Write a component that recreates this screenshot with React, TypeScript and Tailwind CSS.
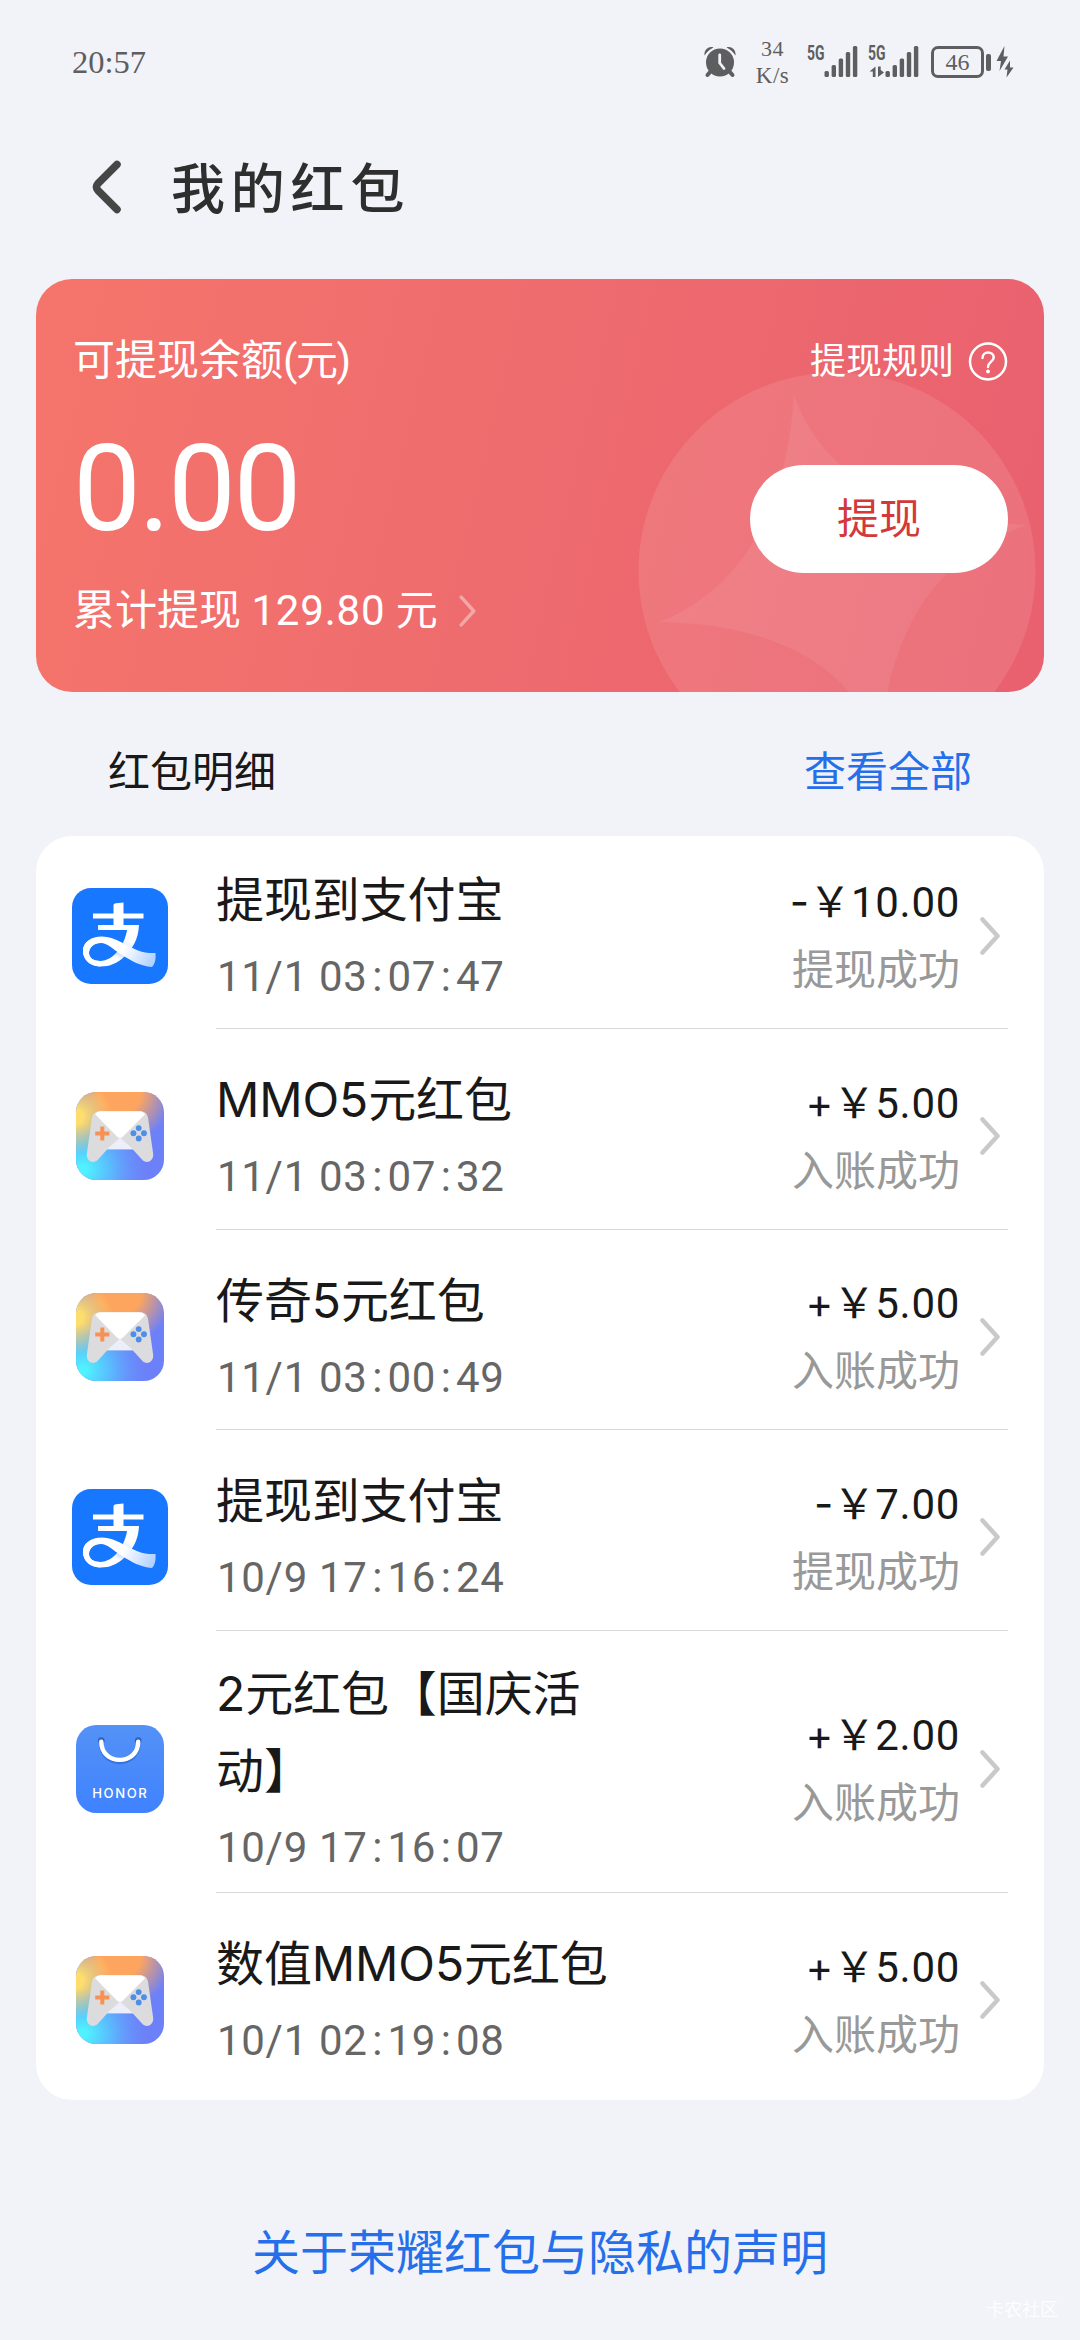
import React from 'react'

type IconKind = 'alipay' | 'game' | 'honor'

interface RecordItem {
  icon: IconKind
  title: string
  time: string
  sign: '+' | '-'
  amount: string
  status: string
}

const RECORDS: RecordItem[] = [
  { icon: 'alipay', title: '提现到支付宝', time: '11/1 03:07:47', sign: '-', amount: '10.00', status: '提现成功' },
  { icon: 'game', title: 'MMO5元红包', time: '11/1 03:07:32', sign: '+', amount: '5.00', status: '入账成功' },
  { icon: 'game', title: '传奇5元红包', time: '11/1 03:00:49', sign: '+', amount: '5.00', status: '入账成功' },
  { icon: 'alipay', title: '提现到支付宝', time: '10/9 17:16:24', sign: '-', amount: '7.00', status: '提现成功' },
  { icon: 'honor', title: '2元红包【国庆活动】', time: '10/9 17:16:07', sign: '+', amount: '2.00', status: '入账成功' },
  { icon: 'game', title: '数值MMO5元红包', time: '10/1 02:19:08', sign: '+', amount: '5.00', status: '入账成功' },
]

function AlipayIcon() {
  return (
    <svg width="96" height="96" viewBox="0 0 96 96">
      <defs>
        <linearGradient id="ali-tail" x1="30" y1="50" x2="84" y2="76" gradientUnits="userSpaceOnUse">
          <stop offset="0.4" stopColor="#fff" />
          <stop offset="1" stopColor="#a9ccff" />
        </linearGradient>
        <linearGradient id="ali-arm" x1="60" y1="40" x2="44" y2="70" gradientUnits="userSpaceOnUse">
          <stop offset="0.35" stopColor="#fff" />
          <stop offset="0.8" stopColor="#c4dcff" />
          <stop offset="1" stopColor="#fff" />
        </linearGradient>
      </defs>
      <rect width="96" height="96" rx="19" fill="#1777ff" />
      <path d="M41.500 17.500C41.500 16 42.500 15.400 44 15.200L51.500 14.600V25.500H71.500V30.500H51.500V37H67C66.500 51 60 62 52.500 68.500C45 75.500 37 78.700 28 78.500C17 78 11 71 11 63C11 54 19 49 30 49L30 54.800C21 54.800 17 60 17 65C17 70 22 73 28 73C42 73 53 56 55 42H26V37H41.500V30.500H21V25.500H41.500Z" fill="url(#ali-arm)" />
      <path d="M11 63C11 54 19 48.500 30 48.500C43 48.500 54 58 66 62.500C72 64.700 78 65.400 83.500 65C84 71 83 76 80 79C68 78 60 73 50 67C40 60.500 35 55 29 55C21 55 17 60 17 65C17 70 22 73 28 73L28 78.500C17 78 11 71 11 63Z" fill="url(#ali-tail)" />
    </svg>
  )
}

function GameIcon() {
  return (
    <svg width="88" height="88" viewBox="0 0 87 87">
      <defs>
        <radialGradient id="g-cyan" cx="0.08" cy="0.88" r="0.75">
          <stop offset="0.05" stopColor="#4ff3ff" />
          <stop offset="0.45" stopColor="#58c0ff" stopOpacity="0.85" />
          <stop offset="1" stopColor="#6b8dfb" stopOpacity="0" />
        </radialGradient>
        <radialGradient id="g-orange" cx="0.5" cy="0" r="0.6">
          <stop offset="0.4" stopColor="#fda55f" />
          <stop offset="1" stopColor="#fda55f" stopOpacity="0" />
        </radialGradient>
        <radialGradient id="g-yellow" cx="0" cy="0.28" r="0.42">
          <stop offset="0.2" stopColor="#fddd6c" />
          <stop offset="1" stopColor="#fddd6c" stopOpacity="0" />
        </radialGradient>
      </defs>
      <rect width="87" height="87" rx="20" fill="#6c80f9" />
      <rect width="87" height="87" rx="20" fill="url(#g-cyan)" />
      <rect width="87" height="87" rx="20" fill="url(#g-orange)" />
      <rect width="87" height="87" rx="20" fill="url(#g-yellow)" />
      <path d="M24 19H63C68 19 70.5 21.5 71.3 26L76.3 61C77 68.5 69.5 71.5 65.5 67L56 56.5H31L21.500 67C17.500 71.5 10 68.500 10.700 61L15.700 26C16.500 21.500 19 19 24 19Z" fill="#dcdcde" />
      <path d="M19 22C20.500 19.800 22 19 24.500 19H62.500C65 19 66.800 20 68.300 22L47 43.500C44.500 46 42.500 46 40 43.500Z" fill="#fff" />
      <path d="M43.500 45.300L56.500 56.500H30.500Z" fill="#eceefa" />
      <path d="M26 34V48M19 41H33" stroke="#f79256" strokeWidth="4" />
      <g fill="#4d8fe8">
        <circle cx="62" cy="35.700" r="2.900" />
        <circle cx="62" cy="46" r="2.900" />
        <circle cx="56.800" cy="40.800" r="2.900" />
        <circle cx="67.200" cy="40.800" r="2.900" />
      </g>
    </svg>
  )
}

function HonorIcon() {
  return (
    <svg width="88" height="88" viewBox="0 0 87 87">
      <defs>
        <linearGradient id="h-bg" x1="0" y1="0" x2="0" y2="1">
          <stop offset="0" stopColor="#5492f6" />
          <stop offset="1" stopColor="#3f82ff" />
        </linearGradient>
      </defs>
      <rect width="87" height="87" rx="20" fill="url(#h-bg)" />
      <circle cx="25" cy="15.500" r="3.300" fill="#2f62c8" />
      <circle cx="61.500" cy="15.500" r="3.300" fill="#2f62c8" />
      <path d="M25 18.500C25 42.500 61.500 42.500 61.500 18.500" fill="none" stroke="#3672e0" strokeWidth="4.400" />
      <path d="M25 16.500C25 40.500 61.500 40.500 61.500 16.500" fill="none" stroke="#fff" strokeWidth="4.400" strokeLinecap="round" />
      <text x="16" y="72" textLength="54" fill="#fff" className="font-[Inter,sans-serif] text-[13px] font-medium">
        HONOR
      </text>
    </svg>
  )
}

function Chevron({ className, width }: { className: string; width: number }) {
  return (
    <svg viewBox="0 0 20 38" className={className} fill="none" stroke="currentColor" strokeWidth={width} strokeLinecap="round" strokeLinejoin="round">
      <path d="M2.500 2.500L17.500 19L2.500 35.500" />
    </svg>
  )
}

function SignalBars() {
  return (
    <g>
      <rect x="0" y="25" width="4.400" height="6" rx="1.500" />
      <rect x="7.100" y="19" width="4.400" height="12" rx="1.500" />
      <rect x="14.200" y="12.500" width="4.400" height="18.500" rx="1.500" />
      <rect x="21.300" y="6" width="4.400" height="25" rx="1.500" />
      <rect x="28.400" y="0" width="4.400" height="31" rx="1.500" />
    </g>
  )
}

function Signal({ arrows }: { arrows?: boolean }) {
  return (
    <svg width="50" height="32" viewBox="0 0 50 32" fill="currentColor" className="overflow-visible">
      <text x="-1" y="14" textLength="17.500" lengthAdjust="spacingAndGlyphs" className="font-[Roboto,sans-serif] text-[20px] font-bold">
        5G
      </text>
      <g transform="translate(16.500 0)">
        <SignalBars />
      </g>
      {arrows && <path d="M6.500 20.500V31H3.800V25.500H0.500ZM9 20.500V31L15 26.500L11.700 24V20.500Z" />}
    </svg>
  )
}

function StatusBar() {
  return (
    <div className="flex h-[124px] items-center justify-between pr-[66px] pl-[72px] font-['Liberation_Serif',serif] text-[#5e5e61]">
      <span className="text-[32.5px]">20:57</span>
      <div className="flex items-center">
        <svg width="32" height="32" viewBox="0 0 32 32" fill="currentColor">
          <path d="M0.600 9.500C-0.500 4 5 -0.500 9.500 1.500C6 3 2.800 6 0.600 9.500ZM31.400 9.500C32.500 4 27 -0.500 22.500 1.500C26 3 29.200 6 31.400 9.500Z" />
          <circle cx="16" cy="16.500" r="14" />
          <path d="M6.500 25.500L3.500 29M25.500 25.500L28.500 29" stroke="currentColor" strokeWidth="4" strokeLinecap="round" />
          <path d="M15.700 9V17L20 22.500" fill="none" stroke="#f1f3f8" strokeWidth="2.800" strokeLinecap="round" strokeLinejoin="round" />
        </svg>
        <div className="mr-[18px] ml-[19px] w-[35px] text-center text-[22px] leading-[27px] tracking-[0.5px]">
          34
          <br />
          <span className="text-[23px]">K/s</span>
        </div>
        <Signal />
        <div className="w-[11px]" />
        <Signal arrows />
        <div className="ml-[12px] flex h-[32px] w-[53px] items-center justify-center rounded-[7px] border-[3px] border-current text-[24px] leading-none">
          46
        </div>
        <div className="ml-[2px] h-[17px] w-[5px] rounded-[2px] bg-current" />
        <svg width="18" height="32" viewBox="0 0 18 32" fill="currentColor" className="ml-[5px]">
          <path d="M8.500 0L0.500 15H5L3.500 25L12 10.500H7.500ZM14 14.500L8.500 23.500H11.500L10.500 31.500L17.500 21.500H14Z" />
        </svg>
      </div>
    </div>
  )
}

function BalanceCard() {
  return (
    <section className="relative mx-9 h-[413px] overflow-hidden rounded-[36px] bg-[linear-gradient(103deg,#f5756b_0%,#ee6b6e_50%,#e9606f_100%)] text-white">
      <svg className="absolute inset-0" width="1008" height="413" viewBox="36 279 1008 413">
        <circle cx="837" cy="571" r="198.500" fill="#fff" fillOpacity="0.1" />
        <path d="M794 395Q836 516 1027 525Q892 570 880 747Q838 626 660 622Q782 572 794 395Z" fill="#fff" fillOpacity="0.07" />
      </svg>
      <div className="relative flex h-full justify-between pr-9 pl-[37px]">
        <div className="flex flex-col">
          <div className="mt-[52px] text-[42px] leading-[60px]">
            可提现余额<span className="tracking-[-1.5px]">(</span>元<span className="-ml-[1.5px]">)</span>
          </div>
          <div className="mt-[28px] text-[121px] leading-[140px] tracking-[-2.5px]">0.00</div>
          <div className="mt-[22px] flex items-center text-[42px] leading-[60px]">
            <span className="whitespace-pre">累计提现 <span className="tracking-[0.8px]">129.80</span> 元</span>
            <Chevron className="ml-[21px] h-[32px] w-[17px] text-white/40" width={4} />
          </div>
        </div>
        <div className="flex flex-col items-end">
          <div className="mt-[53px] flex h-[60px] items-center text-[36px]">
            提现规则
            <svg width="40" height="40" viewBox="0 0 40 40" fill="none" stroke="currentColor" strokeWidth="2.500" className="ml-[14px]">
              <circle cx="20" cy="19.500" r="18" />
              <path d="M14.500 16C14.500 8.500 25.700 9 25.700 15.500C25.700 19.500 20 20 20 25" strokeLinecap="round" />
              <circle cx="20" cy="29.500" r="1.900" fill="currentColor" stroke="none" />
            </svg>
          </div>
          <button className="mt-[73px] h-[108px] w-[258px] rounded-full bg-white text-[42px] text-[#d3393b]">提现</button>
        </div>
      </div>
    </section>
  )
}

function RecordRow({ item }: { item: RecordItem }) {
  return (
    <div className="flex min-h-[186px] items-center pt-px pr-9">
      <div className="flex w-[168px] justify-center">
        {item.icon === 'alipay' && <AlipayIcon />}
        {item.icon === 'game' && <GameIcon />}
        {item.icon === 'honor' && <HonorIcon />}
      </div>
      <div className="ml-3 w-[400px] pt-[10px] pb-[5px]">
        <div className="font-[Inter,'Noto_Sans_CJK_SC',sans-serif] text-[48px] leading-[77px] tracking-[-0.1px] text-[#191919]">
          {item.title}
        </div>
        <div className="pl-[1px] text-[42px] leading-[78px] tracking-[0.7px] text-[#666]">
          {item.time.split(':').map((part, i) => (
            <React.Fragment key={i}>
              {i > 0 && <span className="px-[4.500px]">:</span>}
              {part}
            </React.Fragment>
          ))}
        </div>
      </div>
      <div className="ml-auto pb-px text-right text-[42px] leading-[68px]">
        <div className="text-[#191919]">
          <span className="font-[Inter,sans-serif]">{item.sign}</span>
          <span className="font-['Noto_Sans_CJK_SC',sans-serif]">{'\uffe5'}</span>
          <span className="tracking-[0.7px]">{item.amount}</span>
        </div>
        <div className="text-[#999]">{item.status}</div>
      </div>
      <Chevron className="mr-[8px] ml-[20px] h-[38px] w-[20px] text-[#c9c9c9]" width={4.5} />
    </div>
  )
}

export default function App() {
  return (
    <div className="relative h-[2340px] w-[1080px] overflow-hidden bg-[#f1f3f8] font-[Roboto,'Noto_Sans_CJK_SC',sans-serif]">
      <StatusBar />
      <header className="flex h-[155px] items-start pt-[36px] pl-[92px]">
        <svg width="30" height="54" viewBox="0 0 30 54" fill="none" stroke="#464646" strokeWidth="7.500" strokeLinecap="round" strokeLinejoin="round">
          <path d="M25 4.500L6 23.500Q3 27 6 30.500L25 49.500" />
        </svg>
        <h1 className="ml-[49px] pt-[4px] text-[54px] leading-[54px] font-medium tracking-[5.8px] text-[#2e2e2e]">我的红包</h1>
      </header>
      <BalanceCard />
      <div className="flex h-[144px] items-center justify-between px-[108px] pt-[16px] text-[42px]">
        <h2 className="text-[#191919]">红包明细</h2>
        <a className="text-[#256fea]">查看全部</a>
      </div>
      <section className="mx-9 h-[1264px] rounded-[36px] bg-white pt-[6px]">
        {RECORDS.map((item, i) => (
          <React.Fragment key={i}>
            {i > 0 && <div className="mr-9 mb-[13.5px] ml-[180px] h-px bg-[#d9d9d9]" />}
            <RecordRow item={item} />
          </React.Fragment>
        ))}
      </section>
      <footer className="mt-[119px] text-center text-[48px] leading-[70px] text-[#256fea]">关于荣耀红包与隐私的声明</footer>
      <span className="absolute right-[22px] bottom-[17px] text-[18px] leading-[26px] text-white/80">卡农社区</span>
    </div>
  )
}
